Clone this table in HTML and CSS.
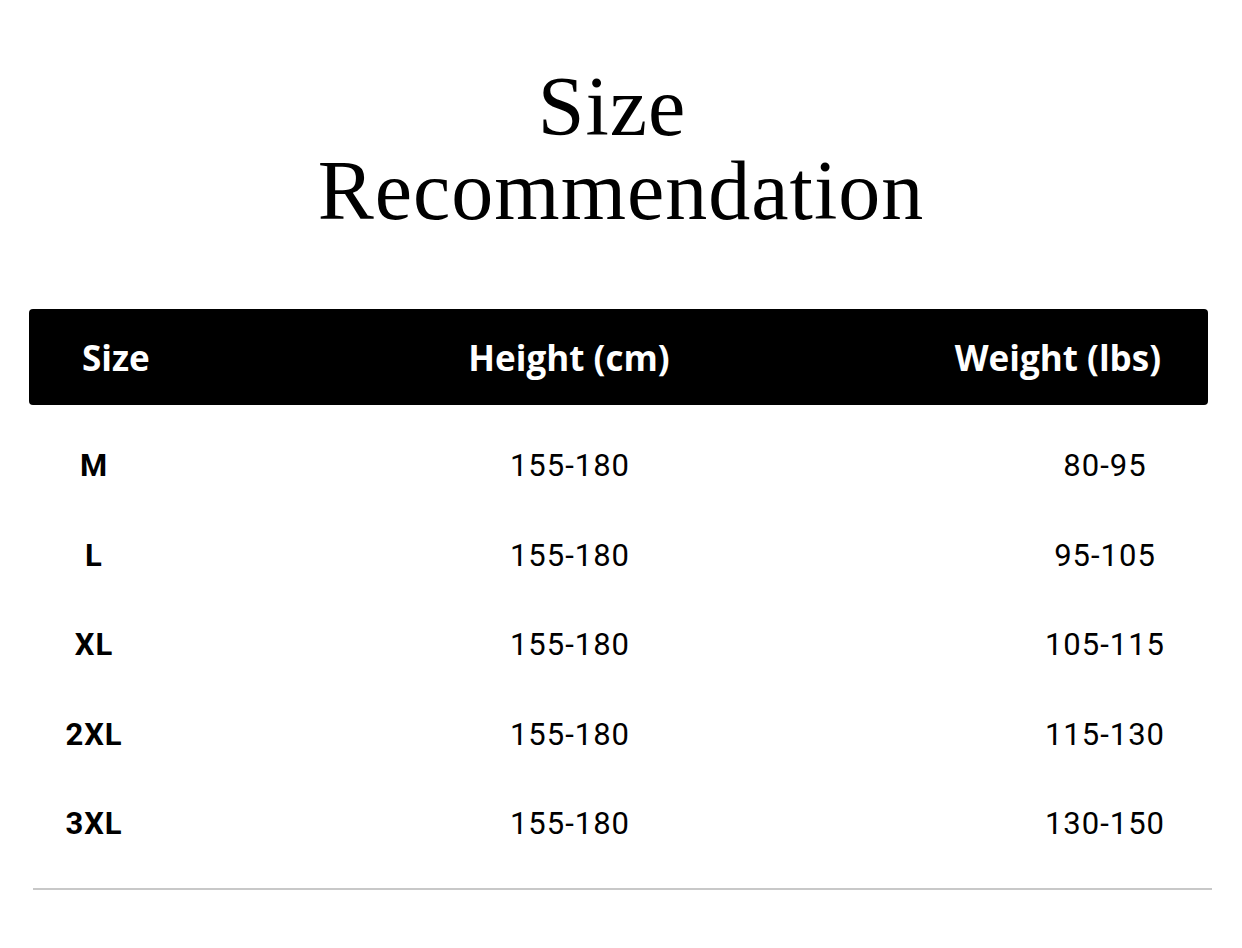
FILE: index.html
```html
<!DOCTYPE html>
<html>
<head>
<meta charset="utf-8">
<link rel="stylesheet" href="styles.css">
</head>
<body>
<div class="page">
  <h1 class="title"><span class="t1">Size</span><span class="t2">Recommendation</span></h1>
  <div class="table">
    <div class="head">
      <div class="h-size">Size</div>
      <div class="h-height">Height (cm)</div>
      <div class="h-weight">Weight (lbs)</div>
    </div>
    <div class="row"><div class="c-size">M</div><div class="c-height">155-180</div><div class="c-weight">80-95</div></div>
    <div class="row"><div class="c-size">L</div><div class="c-height">155-180</div><div class="c-weight">95-105</div></div>
    <div class="row"><div class="c-size">XL</div><div class="c-height">155-180</div><div class="c-weight">105-115</div></div>
    <div class="row"><div class="c-size">2XL</div><div class="c-height">155-180</div><div class="c-weight">115-130</div></div>
    <div class="row"><div class="c-size">3XL</div><div class="c-height">155-180</div><div class="c-weight">130-150</div></div>
  </div>
  <div class="rule"></div>
</div>
</body>
</html>
```
FILE: styles.css
```css
html, body {
  margin: 0;
  padding: 0;
  background: #fff;
}
.page {
  width: 1242px;
  height: 948px;
  padding-top: 65px;
  box-sizing: border-box;
}
.title {
  margin: 0;
  display: flex;
  flex-direction: column;
  align-items: center;
  font-family: "Liberation Serif", serif;
  font-weight: 400;
  font-size: 84px;
  line-height: 84px;
  letter-spacing: 1px;
  color: #000;
}
.t1 {
  display: block;
  margin-right: 18px;
}
.t2 {
  display: block;
}
.table {
  margin: 76px 34px 0 29px;
}
.head {
  height: 96px;
  background: #000;
  border-radius: 4px;
  display: grid;
  grid-template-columns: 130px 1fr 300px;
  align-items: center;
  font-family: "Open Sans", sans-serif;
  font-weight: 700;
  font-size: 35px;
  letter-spacing: 0;
  color: #fff;
}
.h-size {
  padding-left: 53px;
}
.h-height {
  text-align: center;
  padding-left: 71px;
}
.h-weight {
  text-align: right;
  padding-right: 47px;
}
.row {
  display: grid;
  grid-template-columns: 130px 1fr 206px;
  align-items: center;
  height: 89.5px;
  font-family: Roboto, sans-serif;
  font-size: 31px;
  letter-spacing: 1px;
  color: #000;
}
.head + .row {
  margin-top: 16px;
}
.c-size {
  text-align: center;
  font-weight: 700;
}
.c-height {
  text-align: center;
  padding-right: 21px;
}
.c-weight {
  text-align: center;
}
.rule {
  margin: 19px 30px 0 33px;
  height: 2px;
  background: #c8c8c8;
}
```
